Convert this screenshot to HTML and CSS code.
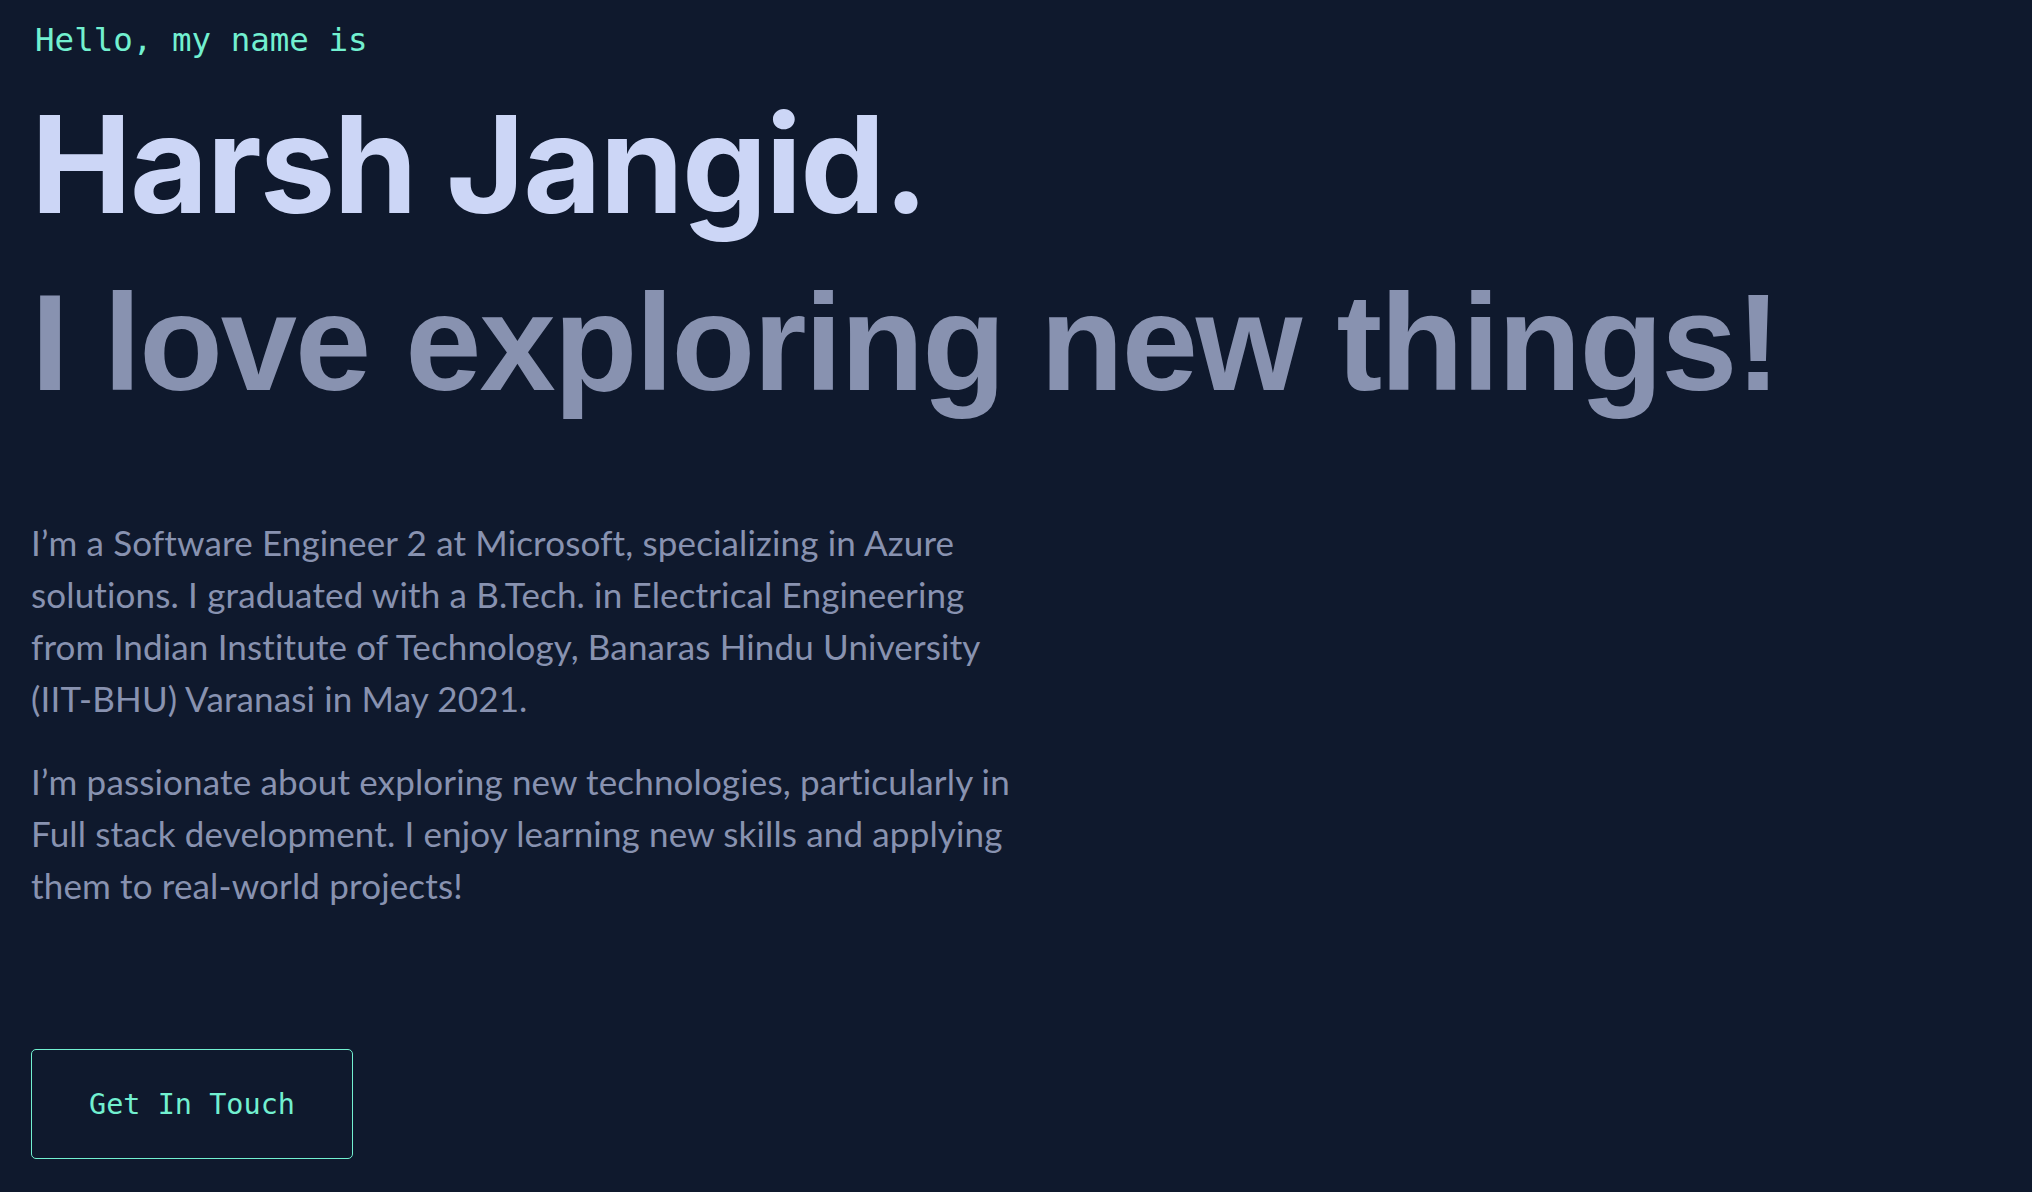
FILE: index.html
```html
<!DOCTYPE html>
<html lang="en">
<head>
<meta charset="utf-8">
<title>Harsh Jangid</title>
<link rel="stylesheet" href="styles.css">
</head>
<body>
<main class="hero">
  <p class="intro">Hello, my name is</p>
  <h1 class="name">Harsh Jangid.</h1>
  <h2 class="tagline">I love exploring new things!</h2>
  <div class="bio">
    <p>I’m a Software Engineer 2 at Microsoft, specializing in Azure solutions. I graduated with a B.Tech. in Electrical Engineering from Indian Institute of Technology, Banaras Hindu University (IIT-BHU) Varanasi in May 2021.</p>
    <p>I’m passionate about exploring new technologies, particularly in Full stack development. I enjoy learning new skills and applying them to real-world projects!</p>
  </div>
  <a class="cta" href="#contact">Get In Touch</a>
</main>
</body>
</html>
```
FILE: styles.css
```css
html, body {
  margin: 0;
  padding: 0;
  background: #0f192d;
  height: 100%;
}

.hero {
  display: flex;
  flex-direction: column;
  align-items: flex-start;
  padding: 24px 0 0 31px;
}

.intro {
  margin: 0 0 0 4px;
  font-family: "DejaVu Sans Mono", "Liberation Mono", monospace;
  font-size: 32.5px;
  line-height: 33px;
  color: #72f0d0;
}

.name {
  margin: 40px 0 0;
  font-family: Inter, "Noto Sans", sans-serif;
  font-weight: 700;
  font-size: 135px;
  line-height: 135px;
  color: #ccd6f6;
  letter-spacing: -1.8px;
}

.tagline {
  margin: 42px 0 0;
  font-family: "Liberation Sans", Arial, sans-serif;
  font-weight: 700;
  font-size: 137px;
  line-height: 137px;
  letter-spacing: -2px;
  color: #8892b0;
}

.bio {
  margin-top: 105px;
  max-width: 995px;
  font-family: Lato, "Noto Sans", sans-serif;
  font-size: 35px;
  line-height: 52px;
  letter-spacing: 0.15px;
  color: #8892b0;
}

.bio p {
  margin: 0 0 31px;
}

.bio p:last-child {
  margin-bottom: 0;
}

.cta {
  margin-top: 138px;
  box-sizing: border-box;
  display: inline-flex;
  align-items: center;
  justify-content: center;
  width: 322px;
  height: 110px;
  border: 1.5px solid #72f0d0;
  border-radius: 5px;
  font-family: "DejaVu Sans Mono", "Liberation Mono", monospace;
  font-size: 28.5px;
  color: #72f0d0;
  text-decoration: none;
}
```
